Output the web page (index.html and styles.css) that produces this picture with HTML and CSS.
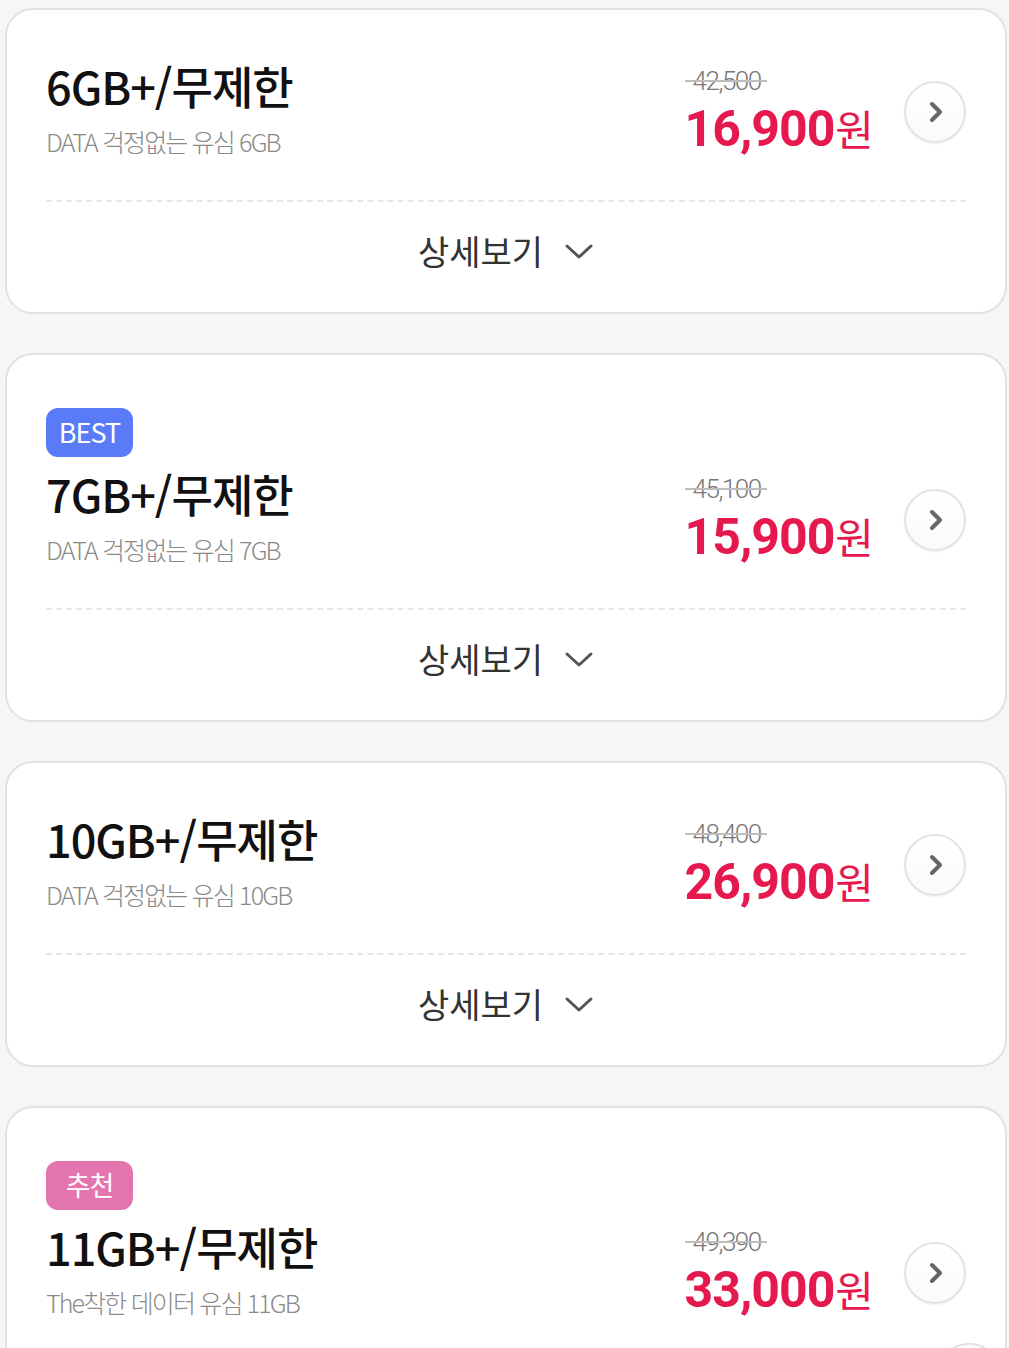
FILE: index.html
```html
<!DOCTYPE html>
<html lang="ko">
<head>
<meta charset="utf-8">
<title>요금제</title>
<link rel="stylesheet" href="styles.css">
</head>
<body>
<div class="page">
  <div class="card">
    <div class="card-main">
      <div class="plan">
        <div class="title">6GB+/무제한</div>
        <div class="sub">DATA 걱정없는 유심 6GB</div>
      </div>
      <div class="pricing">
        <div class="price-box">
          <div class="orig"><span>42,500</span></div>
          <div class="price"><span class="num">16,900</span><span class="won">원</span></div>
        </div>
        <div class="go"><svg width="16" height="24" viewBox="0 0 16 24"><polyline points="4,4 12,12 4,20" fill="none" stroke="#666" stroke-width="4" stroke-linecap="round" stroke-linejoin="round"/></svg></div>
      </div>
    </div>
    <div class="detail"><span>상세보기</span><svg width="30" height="18" viewBox="0 0 30 18"><polyline points="3,3 15,14 27,3" fill="none" stroke="#555" stroke-width="3" stroke-linecap="round" stroke-linejoin="round"/></svg></div>
  </div>

  <div class="card">
    <div class="card-main">
      <div class="plan">
        <div class="badge badge-best">BEST</div>
        <div class="title">7GB+/무제한</div>
        <div class="sub">DATA 걱정없는 유심 7GB</div>
      </div>
      <div class="pricing">
        <div class="price-box">
          <div class="orig"><span>45,100</span></div>
          <div class="price"><span class="num">15,900</span><span class="won">원</span></div>
        </div>
        <div class="go"><svg width="16" height="24" viewBox="0 0 16 24"><polyline points="4,4 12,12 4,20" fill="none" stroke="#666" stroke-width="4" stroke-linecap="round" stroke-linejoin="round"/></svg></div>
      </div>
    </div>
    <div class="detail"><span>상세보기</span><svg width="30" height="18" viewBox="0 0 30 18"><polyline points="3,3 15,14 27,3" fill="none" stroke="#555" stroke-width="3" stroke-linecap="round" stroke-linejoin="round"/></svg></div>
  </div>

  <div class="card">
    <div class="card-main">
      <div class="plan">
        <div class="title">10GB+/무제한</div>
        <div class="sub">DATA 걱정없는 유심 10GB</div>
      </div>
      <div class="pricing">
        <div class="price-box">
          <div class="orig"><span>48,400</span></div>
          <div class="price"><span class="num">26,900</span><span class="won">원</span></div>
        </div>
        <div class="go"><svg width="16" height="24" viewBox="0 0 16 24"><polyline points="4,4 12,12 4,20" fill="none" stroke="#666" stroke-width="4" stroke-linecap="round" stroke-linejoin="round"/></svg></div>
      </div>
    </div>
    <div class="detail"><span>상세보기</span><svg width="30" height="18" viewBox="0 0 30 18"><polyline points="3,3 15,14 27,3" fill="none" stroke="#555" stroke-width="3" stroke-linecap="round" stroke-linejoin="round"/></svg></div>
  </div>

  <div class="card">
    <div class="card-main">
      <div class="plan">
        <div class="badge badge-rec">추천</div>
        <div class="title">11GB+/무제한</div>
        <div class="sub">The착한 데이터 유심 11GB</div>
      </div>
      <div class="pricing">
        <div class="price-box">
          <div class="orig"><span>49,390</span></div>
          <div class="price"><span class="num">33,000</span><span class="won">원</span></div>
        </div>
        <div class="go"><svg width="16" height="24" viewBox="0 0 16 24"><polyline points="4,4 12,12 4,20" fill="none" stroke="#666" stroke-width="4" stroke-linecap="round" stroke-linejoin="round"/></svg></div>
      </div>
    </div>
    <div class="detail"><span>상세보기</span><svg width="30" height="18" viewBox="0 0 30 18"><polyline points="3,3 15,14 27,3" fill="none" stroke="#555" stroke-width="3" stroke-linecap="round" stroke-linejoin="round"/></svg></div>
  </div>
</div>
<div class="float-btn"></div>
</body>
</html>
```

FILE: styles.css
```css
html, body {
  margin: 0;
  padding: 0;
}
body {
  background: #f6f6f8;
  font-family: "Noto Sans CJK KR", "Noto Sans", sans-serif;
  overflow: hidden;
  height: 1348px;
  position: relative;
}
.page {
  display: flex;
  flex-direction: column;
  gap: 39px;
  padding: 8px 2px 0 5px;
}
.card {
  background: #fff;
  border: 2px solid #e1e1e4;
  border-radius: 28px;
  padding: 0 39px;
}
.card-main {
  display: flex;
  justify-content: space-between;
  align-items: flex-end;
  padding: 50px 0 42px 0;
  border-bottom: 2px dashed #e6e6e6;
}
.plan {
  display: flex;
  flex-direction: column;
  align-items: flex-start;
}
.badge {
  width: 87px;
  height: 49px;
  border-radius: 12px;
  color: #fff;
  font-size: 27px;
  line-height: 47px;
  text-align: center;
  letter-spacing: -1px;
  margin: 3px 0 11px 0;
}
.badge-best {
  background: #5a7bf8;
}
.badge-rec {
  background: #e474ad;
}
.title {
  font-size: 45px;
  line-height: 52px;
  font-weight: 500;
  color: #111;
  letter-spacing: -1px;
}
.sub {
  margin-top: 12px;
  font-size: 25px;
  line-height: 34px;
  font-weight: 300;
  color: #8a8a8a;
  letter-spacing: -1.85px;
}
.pricing {
  display: flex;
  align-items: center;
  gap: 30px;
  margin-bottom: -10px;
}
.price-box {
  display: flex;
  flex-direction: column;
  align-items: flex-start;
}
.orig {
  position: relative;
  font-family: Roboto, "Noto Sans", sans-serif;
  font-weight: 300;
  font-size: 26px;
  line-height: 30px;
  color: #777;
  letter-spacing: -1.5px;
  padding: 0 6px 0 8px;
  margin-bottom: 3px;
}
.orig::after {
  content: "";
  position: absolute;
  left: 0;
  right: 0;
  top: 14px;
  height: 2px;
  background: #bdbdbd;
}
.price {
  color: #e6194e;
  line-height: 58px;
  white-space: nowrap;
}
.price .num {
  font-family: Roboto, "Noto Sans", sans-serif;
  font-weight: 700;
  font-size: 50px;
  letter-spacing: -1px;
}
.price .won {
  font-family: "Noto Sans CJK KR", sans-serif;
  font-size: 42px;
  font-weight: 400;
  margin-left: 1px;
}
.go {
  width: 58px;
  height: 58px;
  border: 2px solid #e3e3e3;
  border-radius: 50%;
  background: linear-gradient(#fff, #fafafa);
  box-shadow: 0 1px 2px rgba(0,0,0,0.06);
  display: flex;
  align-items: center;
  justify-content: center;
  margin-bottom: 10px;
}
.go svg {
  margin-left: 2px;
}
.detail {
  height: 96px;
  padding-bottom: 14px;
  display: flex;
  align-items: center;
  justify-content: center;
  gap: 21px;
  font-size: 34px;
  color: #333;
}
.detail svg {
  margin-top: 4px;
}
.float-btn {
  position: absolute;
  left: 936px;
  top: 1343px;
  width: 62px;
  height: 62px;
  border: 2px solid #e3e3e3;
  border-radius: 50%;
  background: #fff;
}
```
